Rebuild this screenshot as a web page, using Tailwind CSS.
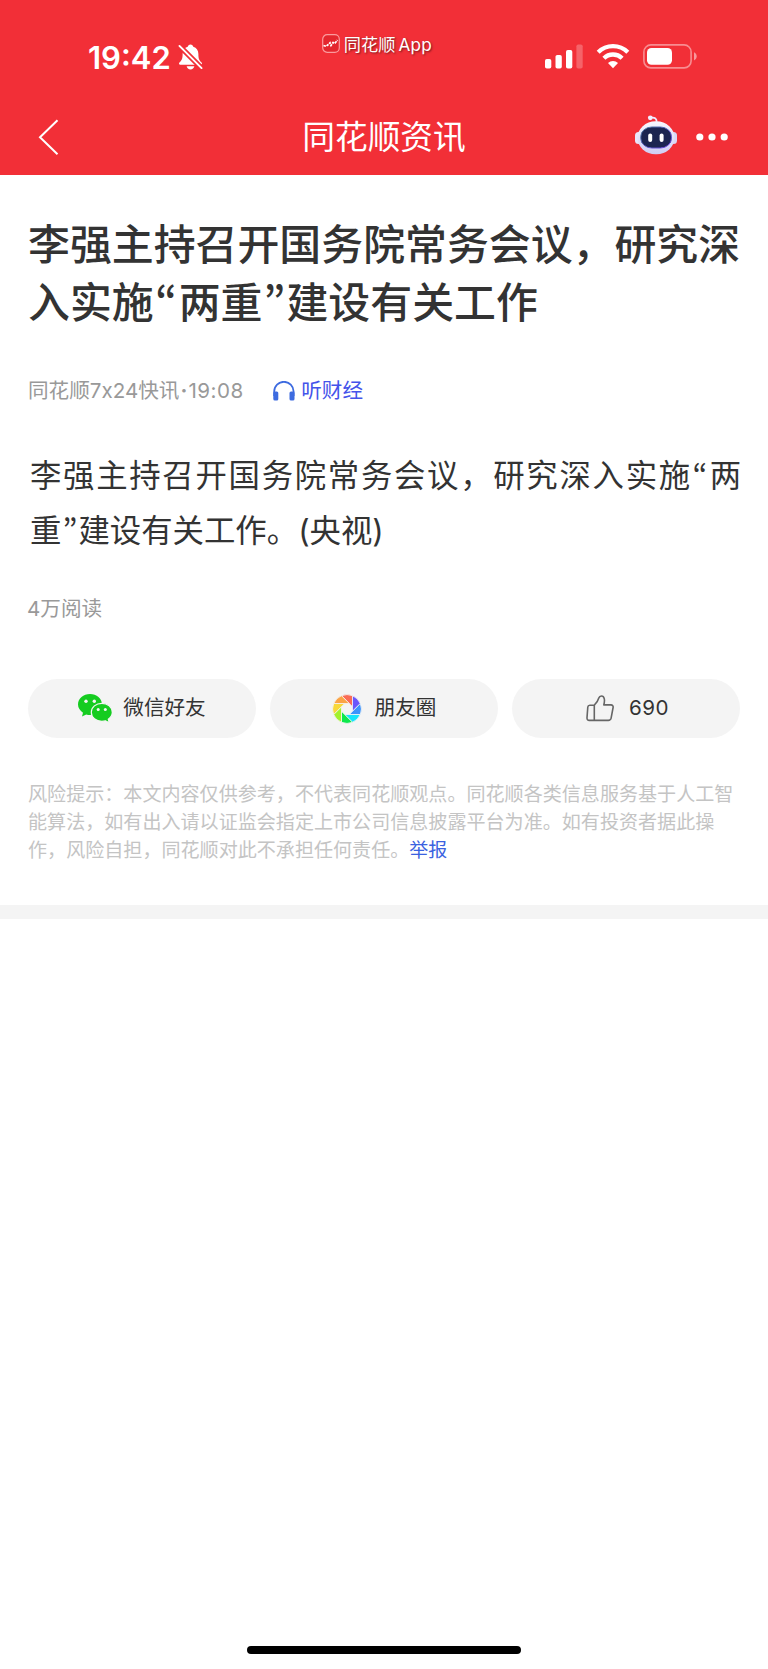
<!DOCTYPE html>
<html lang="zh-CN">
<head>
  <meta charset="UTF-8">
  <meta name="viewport" content="width=device-width, initial-scale=1.0">
  <title>同花顺资讯</title>
  <script src="https://cdn.jsdelivr.net/npm/@tailwindcss/browser@4"></script>
</head>
<body class="bg-white font-['Inter','Noto_Sans_CJK_SC',sans-serif] text-[#333333]">
  <div class="flex flex-col min-h-[1669px]">

    <!-- Header -->
    <header class="h-[175px] bg-[#f22f37] text-white">
      <!-- Status bar -->
      <div class="grid grid-cols-3 h-[98px]">
        <div class="flex items-start pl-[88px] pt-[38px]">
          <span class="text-[31px] leading-10 font-semibold">19:42</span>
          <svg class="ml-[7px] mt-[5px] w-[25px] h-[28px]" viewBox="0 0 26 28">
            <path fill="#fff" d="M13 1c1.6 0 2.700 1 2.900 2.400 3.500 1 5.300 4 5.300 7.600 0 5 .8 6.500 3.300 8.800.9.900.4 2.200-.9 2.200H2.400c-1.300 0-1.800-1.300-.9-2.200C4 17.500 4.800 16 4.800 11c0-3.600 1.800-6.600 5.300-7.600C10.300 2 11.400 1 13 1zM9 23.600h8c-.4 2-2 3.400-4 3.400s-3.600-1.400-4-3.400z"/>
            <path stroke="#f22f37" stroke-width="5.500" d="M0 1l26 26"/>
            <path stroke="#fff" stroke-width="2" stroke-linecap="round" d="M1.500 2.500l23 23"/>
          </svg>
        </div>
        <div class="flex items-start justify-center pt-[33px] pr-[14px]">
          <svg class="w-[18px] h-[19px] mt-px mr-[4px]" viewBox="0 0 18 19">
            <rect x=".7" y=".7" width="16.600" height="17.600" rx="4.500" fill="#e4262e" stroke="#fb9a9d" stroke-width="1.200"/>
            <path d="M1.500 11.500l2.500.8 2-1.500 2-2 1 2.700 2-3 2 .6 2.500-3" fill="none" stroke="#fff" stroke-width="1.700" stroke-dasharray="2.500 .8"/>
          </svg>
          <span class="text-[17.200px] leading-6 whitespace-nowrap text-shadow-[1px_1px_2px_rgb(0_0_0/0.5)]">同花顺<span class="ml-[3px] tracking-[0.300px]">App</span></span>
        </div>
        <div class="flex items-start pl-[33px] pt-[43px]">
          <svg class="w-[38px] h-[26px]" viewBox="0 0 38 26" fill="#fff">
            <rect x="0" y="16" width="6.300" height="9.500" rx="1.800"/>
            <rect x="10.500" y="12" width="6.300" height="13.500" rx="1.800"/>
            <rect x="21" y="7" width="6.300" height="18.500" rx="1.800"/>
            <rect x="31.400" y="1.500" width="6.300" height="24" rx="1.800" opacity=".25"/>
          </svg>
          <svg class="ml-[13px] w-[34px] h-[26px]" viewBox="0 0 34 26" fill="none" stroke="#fff" stroke-width="4.300">
            <path d="M2.200 9.200a21 21 0 0 1 29.600 0"/>
            <path d="M7.900 15.200a13 13 0 0 1 18.200 0"/>
            <path fill="#fff" stroke="none" d="M17 25.200l-5-5.300a7.300 7.300 0 0 1 10 0z"/>
          </svg>
          <svg class="ml-[13px] w-[54px] h-[26px]" viewBox="0 0 54 26">
            <rect x=".9" y="1.900" width="47.200" height="23" rx="7" fill="none" stroke="#fff" stroke-opacity=".45" stroke-width="1.600"/>
            <rect x="4" y="5" width="25" height="16.800" rx="4.500" fill="#fff"/>
            <path d="M51 9.200c1.800.8 2.700 2.400 2.700 4.100s-.9 3.300-2.700 4.100z" fill="#fff" fill-opacity=".5"/>
          </svg>
        </div>
      </div>
      <!-- Nav bar -->
      <div class="grid grid-cols-[1fr_auto_1fr] items-center h-[77px]">
        <svg class="ml-[38px] w-[21px] h-[36px]" viewBox="0 0 21 36" fill="none" stroke="#fff" stroke-width="2">
          <path d="M19.500 1.200L2 18.200l17.500 17"/>
        </svg>
        <h1 class="text-[32.700px] leading-[48px]">同花顺资讯</h1>
        <div class="flex items-center justify-end pr-[40px] gap-[19px]">
          <svg class="w-[42px] h-[40px] mb-[3px]" viewBox="0 0 42 40">
            <defs>
              <linearGradient id="shell" x1="0" y1="0" x2="0" y2="1">
                <stop offset="0" stop-color="#f8f7ff"/>
                <stop offset="1" stop-color="#cfcdf3"/>
              </linearGradient>
              <linearGradient id="rim" x1="0" y1="0" x2="1" y2="1">
                <stop offset="0" stop-color="#4a7c9c"/>
                <stop offset="1" stop-color="#6a3fe0"/>
              </linearGradient>
            </defs>
            <path d="M16 2.800c3.500-.6 5.600.6 5.700 4" fill="none" stroke="#efeaff" stroke-width="1.800"/>
            <circle cx="15.300" cy="2.800" r="2.400" fill="#f1edff"/>
            <rect x="0" y="17" width="7" height="12" rx="3.500" fill="#e9e6fb"/>
            <rect x="35" y="17" width="7" height="12" rx="3.500" fill="#d9d7f5"/>
            <rect x="2.500" y="6.300" width="37" height="33" rx="18" ry="16.500" fill="url(#shell)"/>
            <rect x="5.800" y="12" width="30.600" height="21" rx="11" ry="9.500" fill="#1c2450" stroke="url(#rim)" stroke-width="1"/>
            <rect x="13.200" y="18.500" width="4" height="8.500" rx="2" fill="#fff"/>
            <rect x="24.600" y="18.500" width="4" height="8.500" rx="2" fill="#fff"/>
          </svg>
          <svg class="w-[32px] h-[8px]" viewBox="0 0 32 8" fill="#fff">
            <circle cx="3.800" cy="4" r="3.600"/>
            <circle cx="16" cy="4" r="3.600"/>
            <circle cx="28.200" cy="4" r="3.600"/>
          </svg>
        </div>
      </div>
    </header>

    <!-- Article -->
    <main class="px-[28px] pt-[41px]">
      <h2 class="text-[41.900px] leading-[57.500px] font-medium whitespace-nowrap">
        李强主持召开国务院常务会议，研究深<br>入实施<span class="inline-block w-[25px] h-[57px] text-center align-top font-['Noto_Sans_CJK_SC'] [font-feature-settings:'pwid']">“</span>两重<span class="inline-block w-[24px] h-[57px] text-center align-top font-['Noto_Sans_CJK_SC'] [font-feature-settings:'pwid']">”</span>建设有关工作
      </h2>

      <div class="flex items-center mt-[45px] h-[30px] text-[20.600px] leading-[30px] text-[#999999]">
        <span>同花顺7x24快讯<span class="inline-block w-[9px] text-center font-bold">·</span><span class="tracking-[0.500px]">19:08</span></span>
        <svg class="ml-auto w-[22px] h-[20px]" viewBox="0 0 22 20">
          <path d="M1.200 15v-4.500a9.700 9.700 0 0 1 19.400 0V15" fill="none" stroke="#3d6be0" stroke-width="1.800"/>
          <rect x=".3" y="10.500" width="5" height="9" rx="1.500" fill="#3d6be0"/>
          <rect x="16.500" y="10.500" width="5" height="9" rx="1.500" fill="#3d6be0"/>
        </svg>
        <a href="#" class="ml-[6px] mr-[377px] text-[#4453ea]">听财经</a>
      </div>

      <p class="mt-[43px] pl-[2px] text-[31.400px] leading-[55px] whitespace-nowrap">
        <span class="tracking-[1.700px]">李强主持召开国务院常务会议，研究深入实施<span class="inline-block w-[18px] h-[55px] text-center align-top font-['Noto_Sans_CJK_SC'] [font-feature-settings:'pwid']">“</span>两</span><br>重<span class="inline-block w-[17px] h-[55px] text-center align-top font-['Noto_Sans_CJK_SC'] [font-feature-settings:'pwid']">”</span>建设有关工作。(央视)
      </p>

      <p class="mt-[35px] -ml-px text-[20.600px] leading-[30px] text-[#999999]">4万阅读</p>

      <!-- Share and like buttons -->
      <div class="grid grid-cols-3 gap-[14px] mt-[55px] text-[20.600px]">
        <button class="flex items-center justify-center h-[59px] rounded-full bg-[#f4f4f4]">
          <svg class="w-[34px] h-[29px] mr-[11px]" viewBox="0 0 34 29">
            <path fill="#15cc20" d="M12 0c6.600 0 12 4.600 12 10.500S18.600 21 12 21c-1.300 0-2.600-.2-3.800-.6L4 22.500l1-3.800C2 16.800 0 13.800 0 10.500 0 4.600 5.400 0 12 0z"/>
            <path fill="#15cc20" stroke="#f4f4f4" stroke-width="1.200" d="M23.800 9.300c5.800 0 10.500 3.900 10.500 9 0 2.900-1.600 5.300-4 7l1 3.500-3.800-2c-1.200.4-2.400.5-3.700.5-5.800 0-10.500-3.900-10.500-9s4.700-9 10.500-9z"/>
            <g fill="#f4f4f4">
              <circle cx="8" cy="7.200" r="1.700"/>
              <circle cx="16.300" cy="7.200" r="1.700"/>
              <circle cx="20.200" cy="15.600" r="1.500"/>
              <circle cx="27.300" cy="15.600" r="1.500"/>
            </g>
          </svg>
          微信好友
        </button>
        <button class="flex items-center justify-center h-[59px] rounded-full bg-[#f4f4f4]">
          <svg class="w-[30px] h-[30px] mr-[13px]" viewBox="-15 -15 30 30" stroke="#f4f4f4" stroke-width=".8">
            <path fill="#fa6b55" d="M-5.500-13.300A14.400 14.400 0 0 1 5.500-13.300L5.500-2.300z"/>
            <path fill="#6a55fb" d="M5.500-13.300A14.400 14.400 0 0 1 13.300-5.500L5.500 2.300z"/>
            <path fill="#3b93fc" d="M13.300-5.500A14.400 14.400 0 0 1 13.300 5.500L2.300 5.500z"/>
            <path fill="#17e3fb" d="M13.300 5.500A14.400 14.400 0 0 1 5.500 13.300L-2.300 5.500z"/>
            <path fill="#0ce84c" d="M5.500 13.300A14.400 14.400 0 0 1-5.500 13.300L-5.500 2.300z"/>
            <path fill="#a3f12c" d="M-5.500 13.300A14.400 14.400 0 0 1-13.300 5.500L-5.500-2.300z"/>
            <path fill="#f8d83a" d="M-13.300 5.500A14.400 14.400 0 0 1-13.300-5.500L-2.300-5.500z"/>
            <path fill="#fba446" d="M-13.300-5.500A14.400 14.400 0 0 1-5.500-13.300L2.300-5.500z"/>
          </svg>
          朋友圈
        </button>
        <button class="flex items-center justify-center h-[59px] rounded-full bg-[#f4f4f4] pl-[3px]">
          <svg class="w-[28px] h-[27px] mr-[15px]" viewBox="0 0 28 27" fill="none" stroke="#666" stroke-width="1.600" stroke-linejoin="round">
            <path d="M8.300 10.200H3.800c-1.200 0-1.900.7-2 1.800L1 22.800c-.1 1.700.8 2.600 2.300 2.600h19c1.600 0 2.500-.8 2.800-2.200l2-10.700c.3-1.500-.6-2.600-2.100-2.600h-7.200c.6-2.300.9-4.300.5-6.100C17.900 1.900 16.800 1 15.400 1c-1.300 0-2.200.8-2.600 2.100-.9 3.100-2.400 5.300-4.500 7.100z"/>
            <path d="M8.300 10.200v15.200"/>
          </svg>
          <span class="tracking-[0.500px]">690</span>
        </button>
      </div>

      <p class="mt-[43px] text-[19.070px] leading-[28px] text-[#c4c4c4] whitespace-nowrap">
        风险提示：本文内容仅供参考，不代表同花顺观点。同花顺各类信息服务基于人工智<br>能算法，如有出入请以证监会指定上市公司信息披露平台为准。如有投资者据此操<br>作，风险自担，同花顺对此不承担任何责任。<a href="#" class="text-[#3b62e0]">举报</a>
      </p>
    </main>

    <div class="mt-[40px] h-[14px] bg-[#f4f4f4]"></div>

    <!-- Home indicator -->
    <div class="mt-auto mb-[15px] mx-auto w-[274px] h-[8px] rounded-full bg-black"></div>
  </div>
</body>
</html>
